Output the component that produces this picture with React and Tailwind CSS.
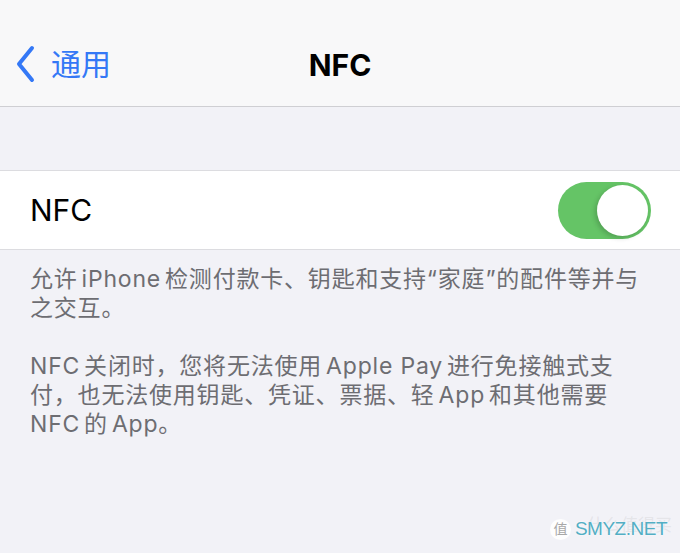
export default function App() {
  const font = { fontFamily: '"Inter", "Noto Sans CJK SC", sans-serif' }

  return (
    <div
      className="relative w-[680px] h-[553px] overflow-hidden bg-[#f2f2f7] font-['Inter','Noto_Sans_CJK_SC',sans-serif]"
    >
      {/* 导航栏 */}
      <div className="relative h-[107px] bg-[#f8f8f9] border-b border-[#cfcfd3] flex items-end pb-[23px]">
        <div className="flex items-center pl-[15px] text-[#3478f6]">
          <svg width="21" height="38" viewBox="0 0 21 38" fill="none">
            <path
              d="M17 3 L4 19 L17 35"
              stroke="#3478f6"
              strokeWidth="4"
              strokeLinecap="round"
              strokeLinejoin="round"
            />
          </svg>
          <span className="ml-[15px] text-[30px] leading-none">通用</span>
        </div>
        <div className="absolute left-0 right-0 bottom-[26px] text-center text-[30px] font-bold leading-none text-black">
          NFC
        </div>
      </div>

      <div className="h-[63px]" />

      {/* NFC 开关 */}
      <div className="h-[80px] bg-white border-y border-[#dcdce0] flex items-center justify-between pl-[30px] pr-[29px]">
        <span className="text-[30px] leading-none text-black">NFC</span>
        <div className="w-[93px] h-[57px] rounded-full bg-[#65c466] flex items-center justify-end pr-[3px]">
          <div className="w-[51px] h-[51px] rounded-full bg-white shadow-[-2px_2px_5px_rgba(0,0,0,0.18)]" />
        </div>
      </div>

      {/* 说明文字 */}
      <div
        className="pt-[15px] px-[30px] text-[23px] leading-[29px] tracking-[0.8px] text-[#6d6d72] whitespace-nowrap"
        style={font}
      >
        <p>
          允许<span className="ml-[4px]">iPhone</span><span className="ml-[4px]">检测付款卡、钥匙和支持“家庭”的配件等并与</span>
          <br />
          之交互。
        </p>
        <p className="mt-[29px]">
          NFC<span className="ml-[4px]">关闭时，您将无法使用</span><span className="ml-[4px]">Apple Pay</span><span className="ml-[4px]">进行免接触式支</span>
          <br />
          付，也无法使用钥匙、凭证、票据、轻<span className="ml-[4px]">App</span><span className="ml-[4px]">和其他需要</span>
          <br />
          NFC<span className="ml-[4px]">的</span><span className="ml-[4px]">App。</span>
        </p>
      </div>

      {/* 水印 */}
      <div className="absolute right-[13px] bottom-[12px] flex items-center gap-[4px]">
        <div className="w-[21px] h-[21px] rounded-full bg-white/90 flex items-center justify-center text-[14px] text-[#a8a8a8] leading-none">
          值
        </div>
        <div className="relative">
          <span className="absolute left-[12px] top-[0px] text-[17px] leading-none text-[#c4c4c8]/30 whitespace-nowrap">
            什么值得买
          </span>
          <span className="relative text-[19px] leading-none tracking-[-0.5px] font-medium text-[#52aec4] [text-shadow:0_0_2px_#fff] [font-family:'Liberation_Sans',sans-serif]">
            SMYZ.NET
          </span>
        </div>
      </div>
    </div>
  )
}
